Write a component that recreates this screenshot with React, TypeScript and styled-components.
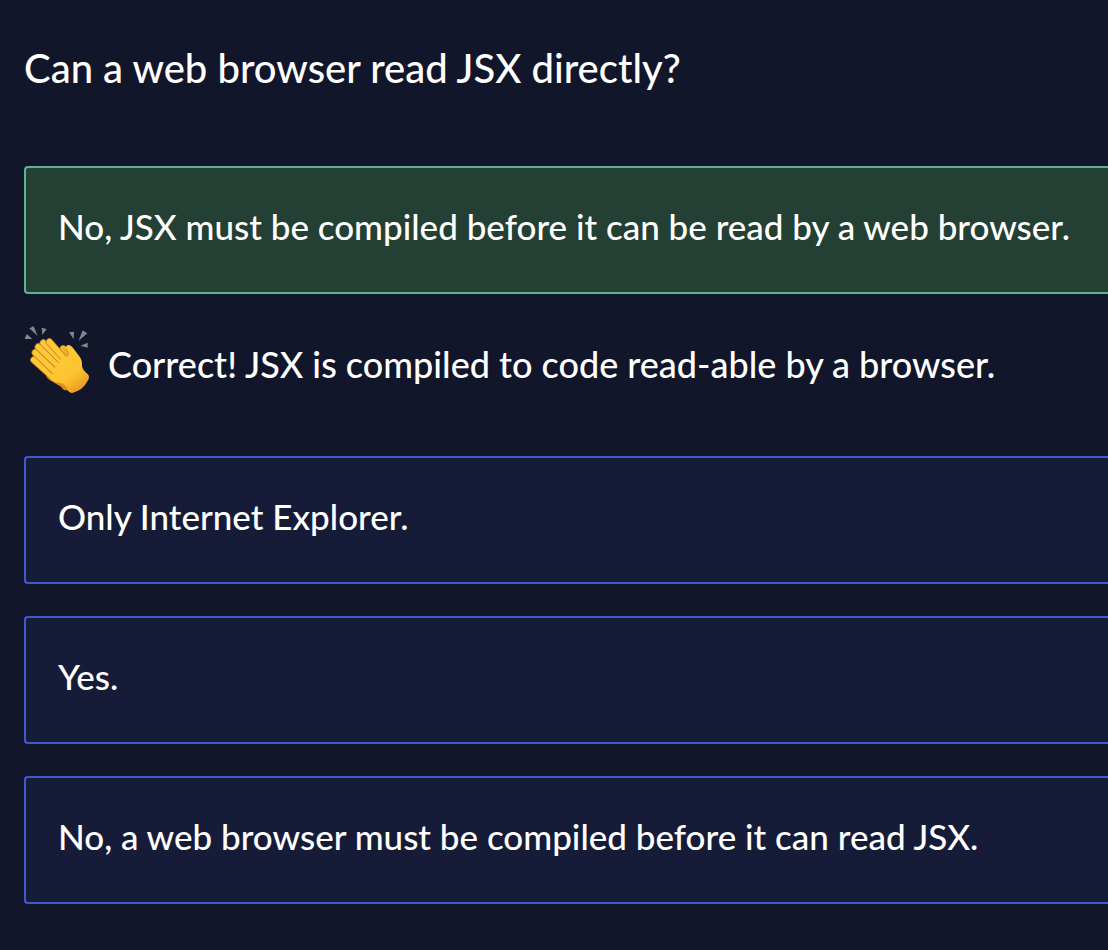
import React, { useState } from "react";
import styled, { createGlobalStyle } from "styled-components";

const GlobalStyle = createGlobalStyle`
  * { box-sizing: border-box; }
  body {
    margin: 0;
    background: #11162b;
    color: #ffffff;
    font-family: Lato, "Liberation Sans", sans-serif;
    font-weight: 500;
  }
`;

const Quiz = styled.main`
  padding: 40px 0 46px 24px;
`;

const Question = styled.h1`
  margin: 0 0 70px;
  font-size: 40px;
  font-weight: 500;
  line-height: 56px;
`;

const Answers = styled.div`
  display: flex;
  flex-direction: column;
  gap: 32px;
`;

const Answer = styled.button<{ $correct?: boolean }>`
  display: block;
  width: 100%;
  min-height: 128px;
  padding: 32px 0 40px 32px;
  border: 2px solid ${(p) => (p.$correct ? "#5fb28c" : "#3a5ccc")};
  border-right: 0;
  border-radius: 4px 0 0 4px;
  background: ${(p) => (p.$correct ? "#243f33" : "#161c38")};
  color: inherit;
  font: inherit;
  font-size: 35px;
  line-height: 52px;
  text-align: left;
  cursor: pointer;
`;

const Feedback = styled.p`
  display: flex;
  gap: 18px;
  margin: 0 0 22px;
  font-size: 36px;
  line-height: 76px;
`;

const Clap = styled.svg`
  flex: none;
  width: 66px;
  height: 68px;
`;

const FINGERS = [
  "M54 132 L112 184",
  "M58 110 L118 168",
  "M67 93 L130 152",
  "M82 81 L142 140",
  "M100 78 L152 136",
];

const ClappingHands = () => (
  <Clap viewBox="24 30 198 204" role="img" aria-label="Clapping hands">
    <defs>
      <linearGradient id="skin" gradientUnits="userSpaceOnUse" x1="70" y1="70" x2="190" y2="235">
        <stop offset="0" stopColor="#fecb3c" />
        <stop offset="0.7" stopColor="#fdc431" />
        <stop offset="1" stopColor="#e8931d" />
      </linearGradient>
      <linearGradient id="back" x1="0" y1="0" x2="0" y2="1">
        <stop offset="0" stopColor="#f5b62c" />
        <stop offset="1" stopColor="#d98718" />
      </linearGradient>
    </defs>
    <g fill="#85868a">
      <path d="M40 37 L53 31 L65 60Z" />
      <path d="M77 35 L92 39 L79 57Z" />
      <path d="M32 54 L49 69 L26 69Z" />
      <path d="M159 49 L174 47 L173 70Z" />
      <path d="M200 43 L214 52 L188 74Z" />
      <path d="M215 80 L215 95 L193 89Z" />
    </g>
    <path
      fill="url(#back)"
      d="M134 91 Q141 84 149 91 L164 128 L158 222 Q143 226 135 212 L102 193 Q92 188 91 180 Z"
    />
    {FINGERS.map((d) => (
      <g key={d} fill="none" strokeLinecap="round">
        <path d={d} stroke="#c9821b" strokeWidth="22" />
        <path d={d} stroke="url(#skin)" strokeWidth="17" />
      </g>
    ))}
    <path
      fill="url(#skin)"
      d="M112 100 L148 118 Q156 122 156 111 L150 99 Q149 86 159 87 Q166 88 174 100 L190 121 Q199 132 198 150 Q199 162 217 176 Q222 184 214 196 Q202 222 169 231 Q158 231 153 218 Q145 201 130 201 Q114 200 100 186 L112 170 L118 154 L128 141 L136 126Z"
    />
    <path
      d="M151 100 Q160 113 155 119 Q150 123 144 116"
      fill="none"
      stroke="#d48b1b"
      strokeWidth="3"
      strokeLinecap="round"
    />
  </Clap>
);

const CORRECT = 0;

const OPTIONS = [
  "No, JSX must be compiled before it can be read by a web browser.",
  "Only Internet Explorer.",
  "Yes.",
  "No, a web browser must be compiled before it can read JSX.",
];

export default function App() {
  const [selected, setSelected] = useState(CORRECT);

  return (
    <>
      <GlobalStyle />
      <Quiz>
        <Question>Can a web browser read JSX directly?</Question>
        <Answers>
          {OPTIONS.map((text, index) => (
            <React.Fragment key={text}>
              <Answer
                type="button"
                aria-pressed={selected === index}
                $correct={selected === index && index === CORRECT}
                onClick={() => setSelected(index)}
              >
                {text}
              </Answer>
              {selected === index && index === CORRECT && (
                <Feedback role="status">
                  <ClappingHands />
                  Correct! JSX is compiled to code read-able by a browser.
                </Feedback>
              )}
            </React.Fragment>
          ))}
        </Answers>
      </Quiz>
    </>
  );
}
